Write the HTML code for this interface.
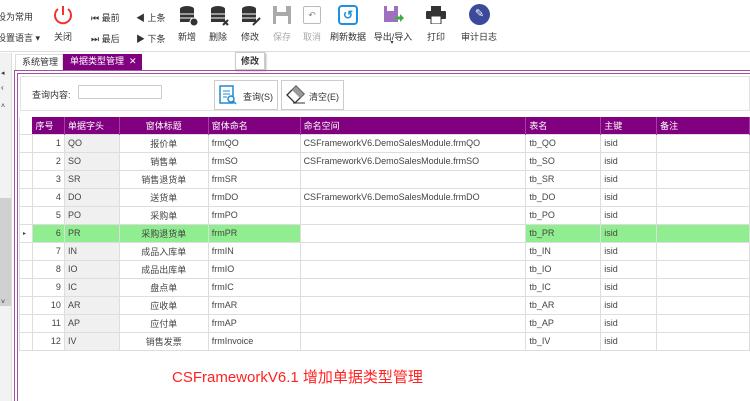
<!DOCTYPE html>
<html><head><meta charset="utf-8"><style>
*{margin:0;padding:0;box-sizing:border-box}
body{width:750px;height:401px;overflow:hidden;background:#fff;font-family:"Liberation Sans","Noto Sans CJK SC",sans-serif;font-size:9px;color:#333;position:relative}
.a{position:absolute}
.lbl{position:absolute;font-size:9px;color:#333;white-space:nowrap;transform:translateX(-50%)}
table{border-collapse:collapse;table-layout:fixed;position:absolute;left:19px;top:117px}
td{height:18px;border:1px solid #ddd;padding:0 3px;font-size:9px;color:#444;white-space:nowrap;overflow:hidden}
th{height:17px;background:#800080;color:#fff;font-weight:normal;text-align:left;padding:0 3px;font-size:9px;border-right:1px solid #a040a0}
.c{text-align:center}.r{text-align:right}
.g{background:#f0f0f0}
tr.sel td{background:#90ee90}
</style></head><body>
<div class="a" style="left:0;top:0;width:750px;height:52px;border-bottom:1px solid #ddd"></div>
<div class="a" style="left:-3px;top:10px;font-size:9px">设为常用</div>
<div class="a" style="left:-3px;top:31px;font-size:9px">设置语言 ▾</div>
<svg class="a" style="left:52px;top:4px" width="22" height="22" viewBox="0 0 22 22"><path d="M6 5a8 8 0 1 0 10 0" fill="none" stroke="#e33" stroke-width="2"/><path d="M11 2v9" stroke="#e33" stroke-width="2"/></svg>
<div class="lbl" style="left:63px;top:30px">关闭</div>
<div class="a" style="left:91px;top:11px">⏮ 最前</div><div class="a" style="left:91px;top:32px">⏭ 最后</div>
<div class="a" style="left:136px;top:11px">◀ 上条</div><div class="a" style="left:136px;top:32px">▶ 下条</div>
<svg class="a" style="left:179px;top:5px" width="20" height="22"><ellipse cx="8" cy="4" rx="7" ry="3" fill="#333"/><rect x="1" y="4" width="14" height="13" fill="#333"/><path d="M1 9h14M1 13h14" stroke="#fff"/><circle cx="15" cy="17" r="4" fill="#333" stroke="#fff"/></svg>
<div class="lbl" style="left:187px;top:30px">新增</div>
<svg class="a" style="left:210px;top:5px" width="20" height="22"><ellipse cx="8" cy="4" rx="7" ry="3" fill="#333"/><rect x="1" y="4" width="14" height="13" fill="#333"/><path d="M1 9h14M1 13h14" stroke="#fff"/><path d="M13 15l5 5M18 15l-5 5" stroke="#333" stroke-width="2"/></svg>
<div class="lbl" style="left:218px;top:30px">删除</div>
<svg class="a" style="left:241px;top:5px" width="20" height="22"><ellipse cx="8" cy="4" rx="7" ry="3" fill="#333"/><rect x="1" y="4" width="14" height="13" fill="#333"/><path d="M1 9h14M1 13h14" stroke="#fff"/><path d="M12 20l7-7" stroke="#333" stroke-width="2"/></svg>
<div class="lbl" style="left:250px;top:30px">修改</div>
<svg class="a" style="left:272px;top:5px" width="20" height="20"><rect x="1" y="1" width="18" height="18" fill="#aaa"/><rect x="5" y="1" width="9" height="6" fill="#fff"/><rect x="4" y="11" width="12" height="8" fill="#fff"/></svg>
<div class="lbl" style="left:282px;top:30px;color:#aaa">保存</div>
<div class="a" style="left:303px;top:6px;width:18px;height:18px;border:1px solid #bbb;border-radius:2px;text-align:center;line-height:16px;color:#888">↶</div>
<div class="lbl" style="left:312px;top:30px;color:#aaa">取消</div>
<div class="a" style="left:338px;top:5px;width:20px;height:20px;border:2px solid #1e90e0;border-radius:4px;text-align:center;line-height:16px;color:#1e90e0;font-weight:bold;font-size:12px">↺</div>
<div class="lbl" style="left:348px;top:30px">刷新数据</div>
<svg class="a" style="left:383px;top:5px" width="22" height="20"><rect x="1" y="1" width="14" height="16" fill="#a070c0"/><rect x="4" y="1" width="7" height="5" fill="#fff"/><path d="M12 13h6" stroke="#4a4" stroke-width="3"/><path d="M17 9l4 4-4 4z" fill="#4a4"/></svg>
<div class="lbl" style="left:393px;top:30px">导出/导入</div>
<div class="lbl" style="left:392px;top:39px;font-size:6px">▾</div>
<svg class="a" style="left:426px;top:6px" width="20" height="18"><rect x="5" y="0" width="10" height="5" fill="#333"/><rect x="0" y="5" width="20" height="8" rx="1" fill="#333"/><rect x="5" y="10" width="10" height="8" fill="#fff" stroke="#333"/></svg>
<div class="lbl" style="left:436px;top:30px">打印</div>
<div class="a" style="left:469px;top:4px;width:21px;height:21px;border-radius:50%;background:#3b4a9a;color:#fff;text-align:center;line-height:21px;font-size:11px">✎</div>
<div class="lbl" style="left:479px;top:30px">审计日志</div>
<div class="a" style="left:0;top:53px;width:12px;height:348px;background:#f2f2f2;border-right:1px solid #ddd"></div>
<div class="a" style="left:1px;top:69px;font-size:7px">◂</div>
<div class="a" style="left:1px;top:83px;font-size:8px">‹</div>
<div class="a" style="left:1px;top:103px;font-size:7px">˄</div>
<div class="a" style="left:0;top:198px;width:11px;height:108px;background:#d0d0d0"></div>
<div class="a" style="left:1px;top:299px;font-size:7px">˅</div>
<div class="a" style="left:15px;top:54px;width:48px;height:16px;border:1px solid #ddd;border-bottom:none;line-height:15px;padding-left:6px">系统管理</div>
<div class="a" style="left:63px;top:54px;width:79px;height:16px;background:#800080;color:#fff;line-height:15px;padding-left:7px">单据类型管理 &nbsp;✕</div>
<div class="a" style="left:235px;top:52px;width:30px;height:18px;background:#fff;border:1px solid #ccc;box-shadow:1px 1px 2px #aaa;text-align:center;line-height:17px;font-weight:bold">修改</div>
<div class="a" style="left:14px;top:70px;width:736px;height:331px;border-left:1px solid #a050a0;border-top:1px solid #a050a0"></div>
<div class="a" style="left:17px;top:73px;width:733px;height:328px;border-left:1px solid #a050a0;border-top:1px solid #a050a0"></div>
<div class="a" style="left:20px;top:76px;width:730px;height:35px;border:1px solid #e2e2e2"></div>
<div class="a" style="left:32px;top:88px">查询内容:</div>
<div class="a" style="left:78px;top:85px;width:84px;height:14px;border:1px solid #ccc"></div>
<div class="a" style="left:214px;top:80px;width:64px;height:30px;border:1px solid #ccc;background:#fff"></div>
<svg class="a" style="left:219px;top:85px" width="18" height="20"><rect x="1" y="1" width="13" height="17" fill="none" stroke="#1e8ad0" stroke-width="1.5"/><path d="M4 6h7M4 9h7M4 12h4" stroke="#1e8ad0"/><circle cx="12" cy="14" r="3" fill="#fff" stroke="#1e8ad0" stroke-width="1.5"/><path d="M14 16l3 3" stroke="#1e8ad0" stroke-width="1.5"/></svg>
<div class="a" style="left:243px;top:90px">查询(S)</div>
<div class="a" style="left:281px;top:80px;width:63px;height:30px;border:1px solid #ccc;background:#fff"></div>
<svg class="a" style="left:285px;top:84px" width="22" height="20"><path d="M2 11l9-9 8 8-9 9z" fill="#fff" stroke="#333" stroke-width="1.3"/><path d="M11 2l8 8-4 4-8-8z" fill="#999"/><path d="M8 19h12" stroke="#333"/></svg>
<div class="a" style="left:309px;top:90px">清空(E)</div>
<div class="a" style="left:19px;top:117px;width:731px;height:234px;border:1px solid #ddd"></div>
<table>
<colgroup><col style="width:13px"><col style="width:32px"><col style="width:55px"><col style="width:89px"><col style="width:92px"><col style="width:226px"><col style="width:75px"><col style="width:56px"><col style="width:93px"></colgroup>
<tr><th style="background:#fff;border:none"></th><th>序号</th><th>单据字头</th><th class="c">窗体标题</th><th>窗体命名</th><th>命名空间</th><th>表名</th><th>主键</th><th>备注</th></tr>
<tr><td></td><td class="r">1</td><td class="g">QO</td><td class="c">报价单</td><td>frmQO</td><td>CSFrameworkV6.DemoSalesModule.frmQO</td><td>tb_QO</td><td>isid</td><td></td></tr>
<tr><td></td><td class="r">2</td><td class="g">SO</td><td class="c">销售单</td><td>frmSO</td><td>CSFrameworkV6.DemoSalesModule.frmSO</td><td>tb_SO</td><td>isid</td><td></td></tr>
<tr><td></td><td class="r">3</td><td class="g">SR</td><td class="c">销售退货单</td><td>frmSR</td><td></td><td>tb_SR</td><td>isid</td><td></td></tr>
<tr><td></td><td class="r">4</td><td class="g">DO</td><td class="c">送货单</td><td>frmDO</td><td>CSFrameworkV6.DemoSalesModule.frmDO</td><td>tb_DO</td><td>isid</td><td></td></tr>
<tr><td></td><td class="r">5</td><td class="g">PO</td><td class="c">采购单</td><td>frmPO</td><td></td><td>tb_PO</td><td>isid</td><td></td></tr>
<tr class="sel"><td style="background:#fff;font-size:6px">▸</td><td class="r">6</td><td>PR</td><td class="c">采购退货单</td><td>frmPR</td><td style="background:#fff;border:1px dashed #999"></td><td>tb_PR</td><td>isid</td><td></td></tr>
<tr><td></td><td class="r">7</td><td class="g">IN</td><td class="c">成品入库单</td><td>frmIN</td><td></td><td>tb_IN</td><td>isid</td><td></td></tr>
<tr><td></td><td class="r">8</td><td class="g">IO</td><td class="c">成品出库单</td><td>frmIO</td><td></td><td>tb_IO</td><td>isid</td><td></td></tr>
<tr><td></td><td class="r">9</td><td class="g">IC</td><td class="c">盘点单</td><td>frmIC</td><td></td><td>tb_IC</td><td>isid</td><td></td></tr>
<tr><td></td><td class="r">10</td><td class="g">AR</td><td class="c">应收单</td><td>frmAR</td><td></td><td>tb_AR</td><td>isid</td><td></td></tr>
<tr><td></td><td class="r">11</td><td class="g">AP</td><td class="c">应付单</td><td>frmAP</td><td></td><td>tb_AP</td><td>isid</td><td></td></tr>
<tr><td></td><td class="r">12</td><td class="g">IV</td><td class="c">销售发票</td><td>frmInvoice</td><td></td><td>tb_IV</td><td>isid</td><td></td></tr>
</table>
<div class="a" style="left:172px;top:366px;font-size:15px;color:#f22;white-space:nowrap">CSFrameworkV6.1 增加单据类型管理</div>
</body></html>
